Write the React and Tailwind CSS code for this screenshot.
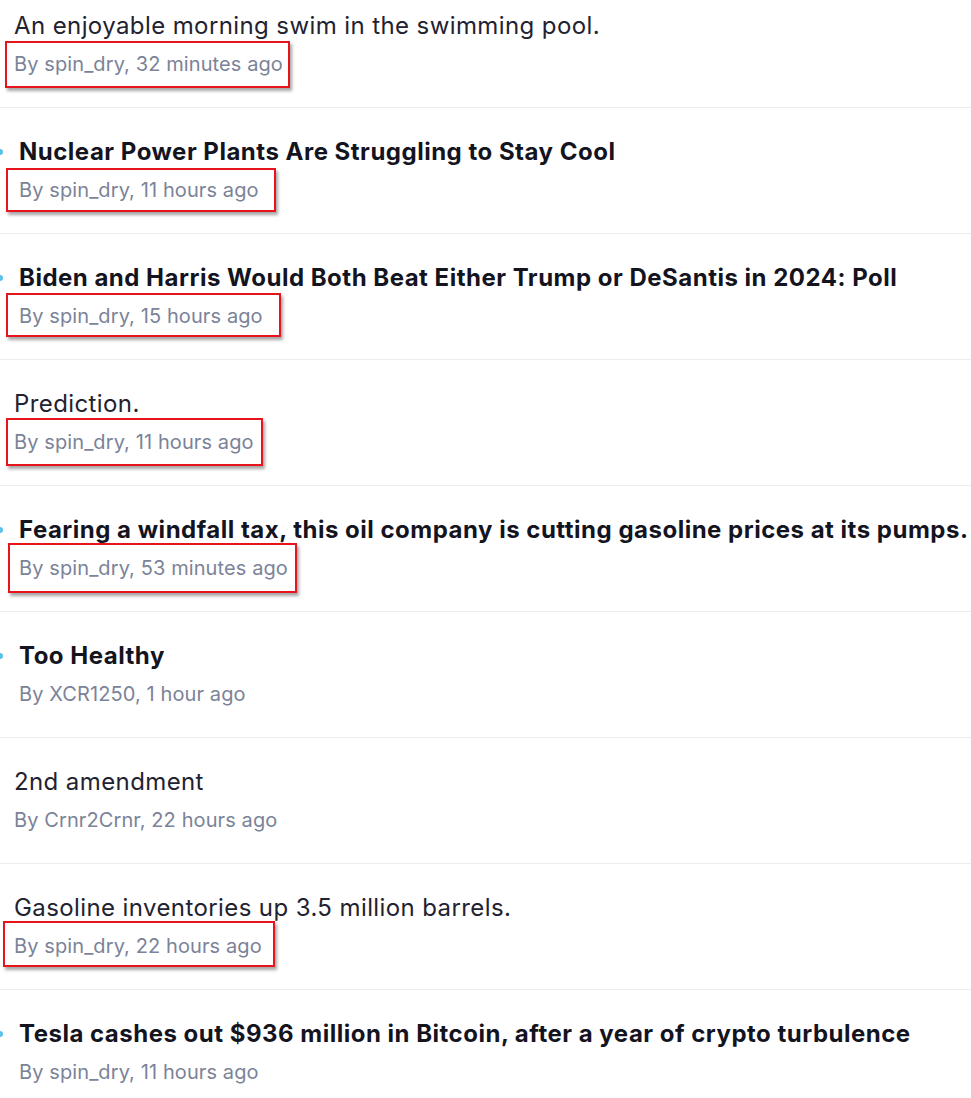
import React from 'react';

// red annotation boxes were drawn by hand, so each sits a little differently
const posts = [
  { title: 'An enjoyable morning swim in the swimming pool.', author: 'spin_dry', time: '32 minutes ago', unread: false, box: '-left-[9px] -right-[7px] -top-[9px] -bottom-[10px]' },
  { title: 'Nuclear Power Plants Are Struggling to Stay Cool', author: 'spin_dry', time: '11 hours ago', unread: true, box: '-left-[13px] -right-[17px] -top-[8px] -bottom-[8px]' },
  { title: 'Biden and Harris Would Both Beat Either Trump or DeSantis in 2024: Poll', author: 'spin_dry', time: '15 hours ago', unread: true, box: '-left-[13px] -right-[18px] -top-[9px] -bottom-[7px]' },
  { title: 'Prediction.', author: 'spin_dry', time: '11 hours ago', unread: false, box: '-left-[8px] -right-[9px] -top-[10px] -bottom-[10px]' },
  { title: 'Fearing a windfall tax, this oil company is cutting gasoline prices at its pumps.', author: 'spin_dry', time: '53 minutes ago', unread: true, box: '-left-[11px] -right-[9px] -top-[11px] -bottom-[11px]' },
  { title: 'Too Healthy', author: 'XCR1250', time: '1 hour ago', unread: true, box: null },
  { title: '2nd amendment', author: 'Crnr2Crnr', time: '22 hours ago', unread: false, box: null },
  { title: 'Gasoline inventories up 3.5 million barrels.', author: 'spin_dry', time: '22 hours ago', unread: false, box: '-left-[11px] -right-[13px] -top-[11px] -bottom-[7px]' },
  { title: 'Tesla cashes out $936 million in Bitcoin, after a year of crypto turbulence', author: 'spin_dry', time: '11 hours ago', unread: true, box: null },
];

const PostRow = ({ post }) => {
  return (
    <div className="relative border-b border-[#ececec] pt-[28px] pb-[29px]">
      {post.unread && (
        <span className="absolute left-[-3px] top-[41px] w-[6px] h-[6px] rounded-full bg-[#5bc0eb]" />
      )}
      <div className={post.unread ? 'pl-[19px]' : 'pl-[14px]'}>
        <h3
          className={
            post.unread
              ? 'text-[24px] leading-[32px] font-bold text-[#14141f] whitespace-nowrap tracking-[0.5px]'
              : 'text-[24px] leading-[32px] font-normal text-[#222230] whitespace-nowrap tracking-[0.4px]'
          }
        >
          {post.title}
        </h3>
        <div className="mt-[8px]">
          <span className="relative inline-block text-[20px] leading-[28px] text-[#7b8398] tracking-[0.1px]">
            By {post.author}, {post.time}
            {post.box && (
              <span className={'absolute border-2 border-[#e8141c] shadow-[2px_3px_3px_rgba(0,0,0,0.35)] ' + post.box} />
            )}
          </span>
        </div>
      </div>
    </div>
  );
};

export default function App() {
  return (
    <div className="w-[971px] h-[1098px] overflow-hidden bg-white" style={{ fontFamily: 'Inter, "Noto Sans", sans-serif' }}>
      <div className="mt-[-18px]">
        {posts.map((post, i) => (
          <PostRow key={i} post={post} />
        ))}
      </div>
    </div>
  );
}
